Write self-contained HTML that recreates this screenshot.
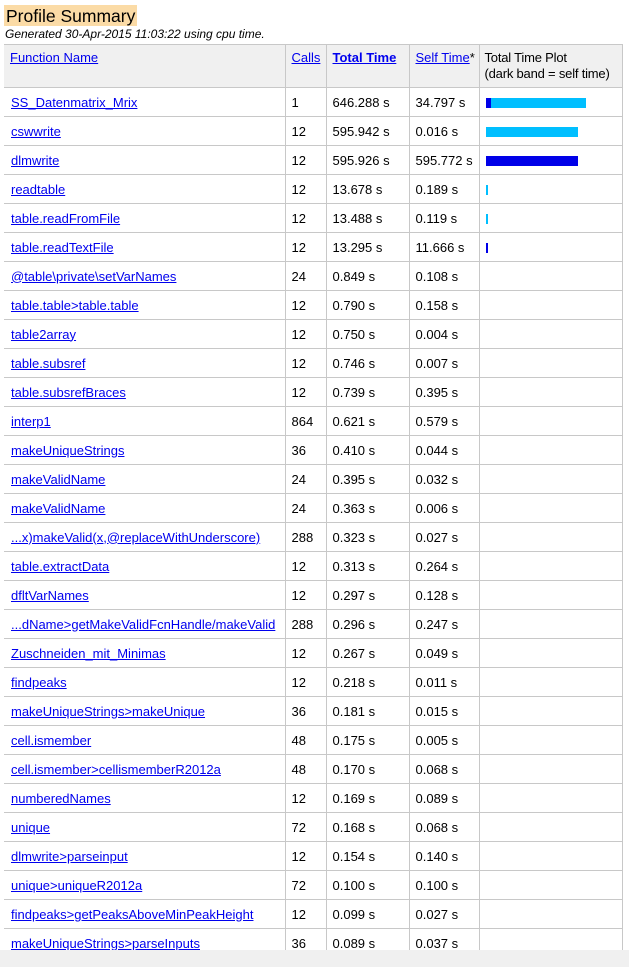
<!DOCTYPE html>
<html><head><style>
body{margin:0;width:629px;height:967px;overflow:hidden;background:#fff;font-family:"Liberation Sans",sans-serif;font-size:13px;color:#000;position:relative}
h1{position:absolute;left:4px;top:5px;margin:0;font-size:17.5px;font-weight:normal;background:#fbdba6;padding:1px 2px 0 2px;line-height:20px}
.gen{position:absolute;left:5px;top:27px;font-style:italic;font-size:12px}
table{position:absolute;left:4px;top:44px;border-collapse:collapse;table-layout:fixed;width:618px}
td,th{border:1px solid #c8c8c8;padding:0 6px;height:28px;font-weight:normal;text-align:left;white-space:nowrap;overflow:hidden}
th{background:#f0f0f0;height:37px;vertical-align:top;padding-top:5px;line-height:16px}
th:nth-child(5){padding-left:5px;padding-right:0;letter-spacing:-0.2px}
a{color:#0000ee;text-decoration:underline}
th:nth-child(3) a{font-weight:bold}
tr td:first-child,tr th:first-child{border-left:none}
td:first-child{padding-left:7px}
td:nth-child(5){padding-left:6px}
.b{display:inline-block;height:10px;vertical-align:middle;background:#00bfff}
.d{background:#0000e8}
.bot{position:absolute;left:0;top:950px;width:629px;height:17px;background:#f0f0f0}
</style></head><body>
<h1>Profile Summary</h1>
<div class="gen">Generated 30-Apr-2015 11:03:22 using cpu time.</div>
<table>
<colgroup><col style="width:281px"><col style="width:41px"><col style="width:83px"><col style="width:70px"><col style="width:143px"></colgroup>
<tr><th><a>Function Name</a></th><th><a>Calls</a></th><th><a>Total Time</a></th><th><a>Self Time</a>*</th><th>Total Time Plot<br>(dark band = self time)</th></tr>
<tr><td><a>SS_Datenmatrix_Mrix</a></td><td>1</td><td>646.288 s</td><td>34.797 s</td><td><span class="b d" style="width:5px"></span><span class="b" style="width:95px"></span></td></tr>
<tr><td><a>cswwrite</a></td><td>12</td><td>595.942 s</td><td>0.016 s</td><td><span class="b" style="width:92px"></span></td></tr>
<tr><td><a>dlmwrite</a></td><td>12</td><td>595.926 s</td><td>595.772 s</td><td><span class="b d" style="width:92px"></span></td></tr>
<tr><td><a>readtable</a></td><td>12</td><td>13.678 s</td><td>0.189 s</td><td><span class="b" style="width:2px"></span></td></tr>
<tr><td><a>table.readFromFile</a></td><td>12</td><td>13.488 s</td><td>0.119 s</td><td><span class="b" style="width:2px"></span></td></tr>
<tr><td><a>table.readTextFile</a></td><td>12</td><td>13.295 s</td><td>11.666 s</td><td><span class="b d" style="width:2px"></span></td></tr>
<tr><td><a>@table\private\setVarNames</a></td><td>24</td><td>0.849 s</td><td>0.108 s</td><td></td></tr>
<tr><td><a>table.table&gt;table.table</a></td><td>12</td><td>0.790 s</td><td>0.158 s</td><td></td></tr>
<tr><td><a>table2array</a></td><td>12</td><td>0.750 s</td><td>0.004 s</td><td></td></tr>
<tr><td><a>table.subsref</a></td><td>12</td><td>0.746 s</td><td>0.007 s</td><td></td></tr>
<tr><td><a>table.subsrefBraces</a></td><td>12</td><td>0.739 s</td><td>0.395 s</td><td></td></tr>
<tr><td><a>interp1</a></td><td>864</td><td>0.621 s</td><td>0.579 s</td><td></td></tr>
<tr><td><a>makeUniqueStrings</a></td><td>36</td><td>0.410 s</td><td>0.044 s</td><td></td></tr>
<tr><td><a>makeValidName</a></td><td>24</td><td>0.395 s</td><td>0.032 s</td><td></td></tr>
<tr><td><a>makeValidName</a></td><td>24</td><td>0.363 s</td><td>0.006 s</td><td></td></tr>
<tr><td><a>...x)makeValid(x,@replaceWithUnderscore)</a></td><td>288</td><td>0.323 s</td><td>0.027 s</td><td></td></tr>
<tr><td><a>table.extractData</a></td><td>12</td><td>0.313 s</td><td>0.264 s</td><td></td></tr>
<tr><td><a>dfltVarNames</a></td><td>12</td><td>0.297 s</td><td>0.128 s</td><td></td></tr>
<tr><td><a>...dName&gt;getMakeValidFcnHandle/makeValid</a></td><td>288</td><td>0.296 s</td><td>0.247 s</td><td></td></tr>
<tr><td><a>Zuschneiden_mit_Minimas</a></td><td>12</td><td>0.267 s</td><td>0.049 s</td><td></td></tr>
<tr><td><a>findpeaks</a></td><td>12</td><td>0.218 s</td><td>0.011 s</td><td></td></tr>
<tr><td><a>makeUniqueStrings&gt;makeUnique</a></td><td>36</td><td>0.181 s</td><td>0.015 s</td><td></td></tr>
<tr><td><a>cell.ismember</a></td><td>48</td><td>0.175 s</td><td>0.005 s</td><td></td></tr>
<tr><td><a>cell.ismember&gt;cellismemberR2012a</a></td><td>48</td><td>0.170 s</td><td>0.068 s</td><td></td></tr>
<tr><td><a>numberedNames</a></td><td>12</td><td>0.169 s</td><td>0.089 s</td><td></td></tr>
<tr><td><a>unique</a></td><td>72</td><td>0.168 s</td><td>0.068 s</td><td></td></tr>
<tr><td><a>dlmwrite&gt;parseinput</a></td><td>12</td><td>0.154 s</td><td>0.140 s</td><td></td></tr>
<tr><td><a>unique&gt;uniqueR2012a</a></td><td>72</td><td>0.100 s</td><td>0.100 s</td><td></td></tr>
<tr><td><a>findpeaks&gt;getPeaksAboveMinPeakHeight</a></td><td>12</td><td>0.099 s</td><td>0.027 s</td><td></td></tr>
<tr><td><a>makeUniqueStrings&gt;parseInputs</a></td><td>36</td><td>0.089 s</td><td>0.037 s</td><td></td></tr>
</table>
<div class="bot"></div>
</body></html>
